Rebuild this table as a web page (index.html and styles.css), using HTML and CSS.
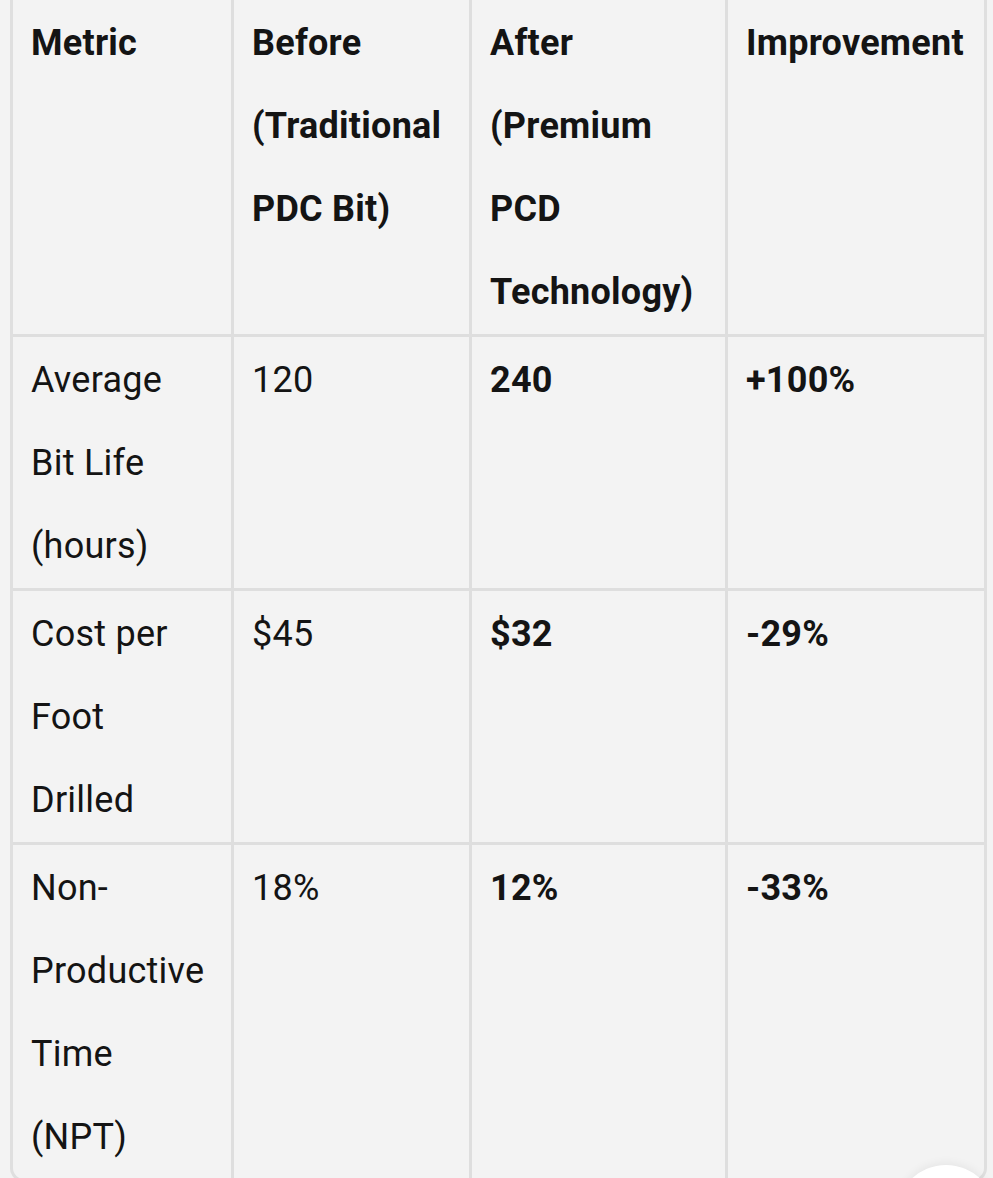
FILE: index.html
```html
<!DOCTYPE html>
<html lang="en">
<head>
<meta charset="utf-8">
<title>Comparison</title>
<link rel="stylesheet" href="styles.css">
</head>
<body>
<div class="table-wrap">
  <div class="grid">
    <div class="cell head">Metric</div>
    <div class="cell head">Before (Traditional PDC Bit)</div>
    <div class="cell head">After (Premium PCD Technology)</div>
    <div class="cell head last">Improvement</div>

    <div class="cell">Average Bit Life (hours)</div>
    <div class="cell">120</div>
    <div class="cell strong">240</div>
    <div class="cell strong last">+100%</div>

    <div class="cell">Cost per Foot Drilled</div>
    <div class="cell">$45</div>
    <div class="cell strong">$32</div>
    <div class="cell strong last">-29%</div>

    <div class="cell bottom">Non-Productive Time (NPT)</div>
    <div class="cell bottom">18%</div>
    <div class="cell strong bottom">12%</div>
    <div class="cell strong bottom last">-33%</div>
  </div>
</div>
<div class="fab"></div>
</body>
</html>
```

FILE: styles.css
```css
html, body {
  margin: 0;
  padding: 0;
  background: #f3f3f3;
  overflow: hidden;
}

body {
  font-family: Roboto, "Liberation Sans", sans-serif;
  color: #141414;
  position: relative;
  height: 1178px;
}

.table-wrap {
  margin-left: 10px;
  width: 977px;
  box-sizing: border-box;
  border: 3px solid #dfdfdf;
  border-top: 0;
  border-radius: 0 0 14px 14px;
  overflow: hidden;
  background: #f3f3f3;
}

.grid {
  display: grid;
  grid-template-columns: 221px 238px 256px 256px;
}

.cell {
  box-sizing: border-box;
  padding: 2px 18px 0 18px;
  font-size: 36px;
  line-height: 83px;
  letter-spacing: 0.25px;
  border-right: 3px solid #dedede;
  border-bottom: 3px solid #dedede;
}

.grid > .cell:nth-child(4n+1) {
  padding-right: 22px;
}

.cell.last {
  border-right: 0;
  padding-right: 8px;
}

.cell.bottom {
  border-bottom: 0;
}

.head,
.strong {
  font-weight: 700;
}

.fab {
  position: absolute;
  left: 896px;
  top: 1165px;
  width: 100px;
  height: 100px;
  border-radius: 50%;
  background: #ffffff;
  box-shadow: 0 -2px 10px rgba(0, 0, 0, 0.06);
}
```
